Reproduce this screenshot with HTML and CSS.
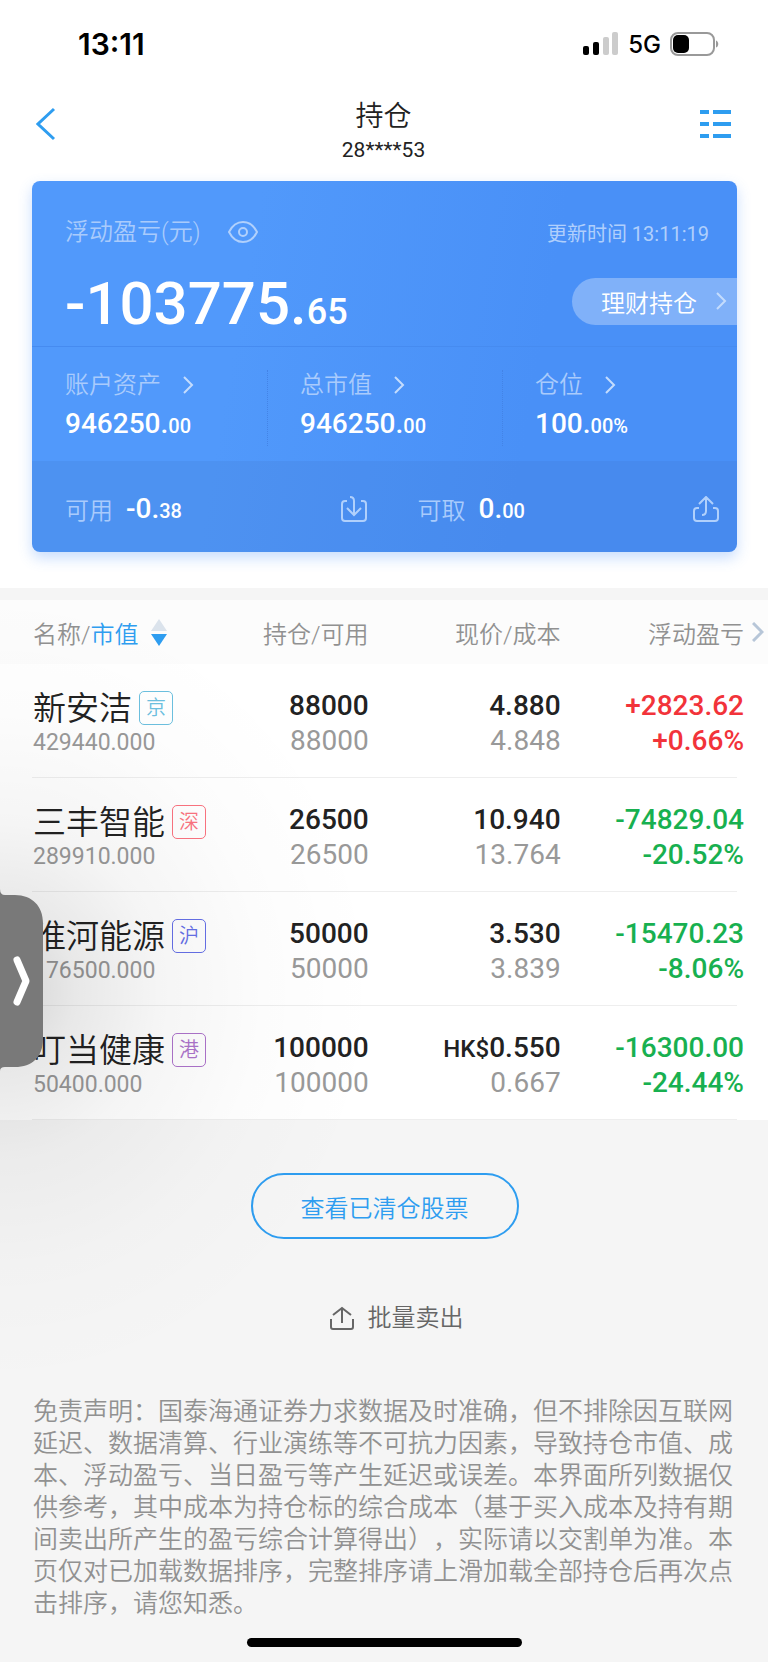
FILE: index.html
```
<!doctype html>
<html lang="zh-CN">
	<head>
		<meta charset="utf-8">
		<title>持仓</title>
		<meta name="viewport" content="width=device-width,initial-scale=1">
		<link rel="stylesheet" href="styles.css">
	</head>
	<body>
		<!-- 状态栏 -->
		<div class="status">
			<span class="time">13:11</span>
			<div class="status-right">
				<svg width="36" height="24" viewBox="0 0 36 24">
					<rect x="0" y="14" width="6" height="9" rx="2"/>
					<rect x="10" y="10" width="6" height="13" rx="2"/>
					<rect x="20" y="5" width="6" height="18" rx="2" fill="#ccc"/>
					<rect x="29" y="0" width="6" height="23" rx="2" fill="#ccc"/>
				</svg>
				<span class="net">5G</span>
				<svg width="50" height="24" viewBox="0 0 50 24">
					<rect x="1" y="1" width="43" height="22" rx="7" fill="none" stroke="#999" stroke-width="2"/>
					<rect x="3" y="3" width="16" height="18" rx="5"/>
					<path d="M46 8.5c3 1 3 6 0 7z" fill="#999"/>
				</svg>
			</div>
		</div>
		<!-- 导航 -->
		<header class="nav">
			<button class="icon-btn back" aria-label="返回">
				<svg width="20" height="34" viewBox="0 0 20 34"><path d="M18 2 2 17l16 15" fill="none" stroke="#2e9df0" stroke-width="3"/></svg>
			</button>
			<div class="nav-title">
				<h1>持仓</h1>
				<p>28****53</p>
			</div>
			<button class="icon-btn" aria-label="菜单">
				<svg width="31" height="28" viewBox="0 0 31 28" fill="#2e9df0">
					<path d="M0 0h9v4H0zM13 0h18v4H13zM0 12h9v4H0zM13 12h18v4H13zM0 24h9v4H0zM13 24h18v4H13z"/>
				</svg>
			</button>
		</header>
		<!-- 资产卡片 -->
		<section class="card">
			<div class="card-top">
				<div class="line">
					<span class="label">浮动盈亏(元)</span>
					<button class="icon-btn eye" aria-label="显示金额">
						<svg width="30" height="22" viewBox="0 0 30 22" fill="none" stroke="#b0d0fc" stroke-width="2">
							<path d="M1 11C4 5 9 1 15 1s11 4 14 10c-3 6-8 10-14 10S4 17 1 11z"/>
							<circle cx="15" cy="11" r="4"/>
						</svg>
					</button>
					<span class="update">更新时间 13:11:19</span>
				</div>
				<div class="line total">
					<strong class="profit">-103775.<small>65</small></strong>
					<a class="pill" href="#">理财持仓
						<svg class="arrow" width="11" height="18" viewBox="0 0 11 18"><path d="m1 1 8 8-8 8"/></svg>
					</a>
				</div>
			</div>
			<div class="card-mid">
				<a class="asset" href="#">
					<span class="label">账户资产<svg class="arrow" width="11" height="18" viewBox="0 0 11 18"><path d="m1 1 8 8-8 8"/></svg></span>
					<strong>946250.<small>00</small></strong>
				</a>
				<a class="asset" href="#">
					<span class="label">总市值<svg class="arrow" width="11" height="18" viewBox="0 0 11 18"><path d="m1 1 8 8-8 8"/></svg></span>
					<strong>946250.<small>00</small></strong>
				</a>
				<a class="asset" href="#">
					<span class="label">仓位<svg class="arrow" width="11" height="18" viewBox="0 0 11 18"><path d="m1 1 8 8-8 8"/></svg></span>
					<strong>100.<small>00%</small></strong>
				</a>
			</div>
			<div class="card-bottom">
				<div class="cash">
					<span class="label">可用</span><strong>-0.<small>38</small></strong>
					<button class="icon-btn" aria-label="转入">
						<svg class="line-icon" width="26" height="26" viewBox="0 0 26 26"><path d="M6 5H4a3 3 0 0 0-3 3v14a3 3 0 0 0 3 3h18a3 3 0 0 0 3-3V8a3 3 0 0 0-3-3h-2M9 1c3 0 4 1 4 4v13M6 12l7 7 7-7"/></svg>
					</button>
				</div>
				<div class="cash">
					<span class="label">可取</span><strong>0.<small>00</small></strong>
					<button class="icon-btn" aria-label="转出">
						<svg class="line-icon" width="26" height="26" viewBox="0 0 26 26"><path d="M6 12H4a3 3 0 0 0-3 3v7a3 3 0 0 0 3 3h18a3 3 0 0 0 3-3v-7a3 3 0 0 0-3-3h-2M9 19c3 0 4-1 4-4V2M6 8l7-7 7 7"/></svg>
					</button>
				</div>
			</div>
		</section>
		<!-- 持仓列表 -->
		<table class="list">
			<thead>
				<tr>
					<th class="name"><button class="sort">名称/<em>市值</em>
						<svg width="16" height="27" viewBox="0 0 16 27"><path d="m8 0 8 12H0z" fill="#dbe3ec"/><path d="M0 15h16L8 27z" fill="#2e9df0"/></svg>
					</button></th>
					<th class="hold">持仓/可用</th>
					<th class="price">现价/成本</th>
					<th class="gain">浮动盈亏
						<svg class="more" width="12" height="20" viewBox="0 0 12 20"><path d="m1 1 9 9-9 9" fill="none" stroke="#b7c6d8" stroke-width="3"/></svg>
					</th>
				</tr>
			</thead>
			<tbody>
				<tr>
					<td class="name"><div class="stock">新安洁<span class="tag jing">京</span></div><p>429440.000</p></td>
					<td>88000<p>88000</p></td>
					<td>4.880<p>4.848</p></td>
					<td class="gain up">+2823.62<p>+0.66%</p></td>
				</tr>
				<tr>
					<td class="name"><div class="stock">三丰智能<span class="tag shen">深</span></div><p>289910.000</p></td>
					<td>26500<p>26500</p></td>
					<td>10.940<p>13.764</p></td>
					<td class="gain down">-74829.04<p>-20.52%</p></td>
				</tr>
				<tr>
					<td class="name"><div class="stock">淮河能源<span class="tag hu">沪</span></div><p>176500.000</p></td>
					<td>50000<p>50000</p></td>
					<td>3.530<p>3.839</p></td>
					<td class="gain down">-15470.23<p>-8.06%</p></td>
				</tr>
				<tr>
					<td class="name"><div class="stock">叮当健康<span class="tag gang">港</span></div><p>50400.000</p></td>
					<td>100000<p>100000</p></td>
					<td><small>HK$</small>0.550<p>0.667</p></td>
					<td class="gain down">-16300.00<p>-24.44%</p></td>
				</tr>
			</tbody>
		</table>
		<!-- 底部 -->
		<footer class="foot">
			<button class="cleared">查看已清仓股票</button>
			<button class="batch">
				<svg width="24" height="24" viewBox="0 0 24 24" fill="none" stroke="#666" stroke-width="2"><path d="M1 13v8a2 2 0 0 0 2 2h18a2 2 0 0 0 2-2v-8M12 17V2M3 9l9-7 9 7"/></svg>
				批量卖出
			</button>
			<p class="notice">免责声明：国泰海通证券力求数据及时准确，但不排除因互联网延迟、数据清算、行业演练等不可抗力因素，导致持仓市值、成本、浮动盈亏、当日盈亏等产生延迟或误差。本界面所列数据仅供参考，其中成本为持仓标的综合成本（基于买入成本及持有期间卖出所产生的盈亏综合计算得出），实际请以交割单为准。本页仅对已加载数据排序，完整排序请上滑加载全部持仓后再次点击排序，请您知悉。</p>
			<div class="home"></div>
		</footer>
		<!-- 左侧悬浮把手 -->
		<div class="shade"></div>
		<button class="handle" aria-label="展开">
			<svg width="43" height="182" viewBox="0 0 43 182">
				<path d="M0 0q0 6 5 6h10c17 0 28 11 28 28v116c0 18-11 28-28 28H5q-5 0-5 4z" fill="#797979"/>
				<path d="m17 71 9 21-9 21" fill="none" stroke="#fff" stroke-width="7" stroke-linecap="round" stroke-linejoin="round"/>
			</svg>
		</button>
	</body>
</html>
```
FILE: styles.css
```
* {
	margin: 0;
	padding: 0;
	box-sizing: border-box;
}
body{
	position: relative;
	background-color: #fff;
	font-family: Roboto,"Noto Sans CJK SC",sans-serif;
	font-size: 24px;
	font-weight: 350;
	color: #222;
	overflow-x: hidden;
}
button{
	border: 0;
	background: none;
	font: inherit;
	color: inherit;
}
a{
	color: inherit;
	text-decoration: none;
}
svg{
	display: block;
	flex: none;
}
strong{
	font-size: 28px;
	font-weight: 500;
	color: #fff;
}
strong small{font-size: 20px;}

/* 状态栏 */
.status{
	display: flex;
	align-items: center;
	justify-content: space-between;
	height: 88px;
	padding: 0 48px 0 78px;
	font-family: Inter,sans-serif;
	color: #000;
}
.time{
	font-size: 30px;
	font-weight: 600;
}
.status-right{
	display: flex;
	align-items: center;
	gap: 9px;
}
.net{
	font-size: 24px;
	font-weight: 500;
}

/* 导航 */
.nav{
	display: flex;
	align-items: center;
	justify-content: space-between;
	height: 72px;
	padding: 0 37px 0 36px;
}
.back{width: 31px;}
.nav-title{
	padding-top: 14px;
	text-align: center;
}
.nav h1{
	font-size: 28px;
	line-height: 38px;
	font-weight: 350;
}
.nav p{
	font-size: 21px;
	line-height: 28px;
	font-weight: 400;
}

/* 资产卡片 */
.card{
	margin: 21px 31px 36px 32px;
	border-radius: 8px;
	background: linear-gradient(100deg,#5199fb 30%,#4990f7 70%);
	box-shadow: 0 6px 14px rgba(73,144,247,.3);
	overflow: hidden;
}
.label{color: #a9cbfc;}
.card-top{
	height: 165px;
	padding: 33px 0 0 33px;
}
.line{
	display: flex;
	align-items: center;
}
.line .label{line-height: 36px;}
.eye{margin-left: 27px;}
.update{
	margin-left: auto;
	padding-right: 28px;
	font-size: 20px;
	font-weight: 400;
	color: #b0cffc;
}
.total{margin-top: 19px;}
.profit{
	font-size: 60px;
	line-height: 70px;
}
.profit small{font-size: 36px;}
.pill{
	display: flex;
	align-items: center;
	gap: 19px;
	height: 47px;
	margin: 0 0 14px auto;
	padding: 0 10px 0 29px;
	border-radius: 24px 0 0 24px;
	background-color: rgba(255,255,255,.3);
	color: #fff;
}
.arrow{
	fill: none;
	stroke: #c4dcfd;
	stroke-width: 2;
}
.card-mid{
	display: grid;
	grid-template-columns: repeat(3,1fr);
	height: 115px;
	padding: 23px 0 24px;
	border-top: 1px solid #468bf0;
}
.asset{
	padding-left: 32px;
	border-left: 1px dotted #4383e6;
}
.asset:first-child{border-left-color: transparent;}
.asset .label{
	display: flex;
	align-items: center;
	gap: 22px;
	line-height: 30px;
}
.asset strong{
	display: block;
	margin-top: 4px;
	line-height: 40px;
}
.card-bottom{
	display: grid;
	grid-template-columns: 1fr 1fr;
	height: 91px;
	background-color: rgba(60,110,190,.15);
}
.cash{
	display: flex;
	align-items: center;
	padding: 4px 18px 0 33px;
}
.cash strong{margin-left: 13px;}
.cash button{margin-left: auto;}
.line-icon{
	fill: none;
	stroke: #b0d0fc;
	stroke-width: 2;
}

/* 持仓列表 */
.list{
	width: 100%;
	border-top: 12px solid #f5f5f5;
	border-spacing: 0;
	table-layout: fixed;
	text-align: right;
}
.list th{
	position: relative;
	height: 64px;
	background-color: #fcfcfc;
	font-weight: 350;
	color: #919191;
}
.list .name{
	padding-left: 33px;
	text-align: left;
}
.list .hold{width: 23%;}
.list th.name{width: 25%;}
.list .price{width: 25%;}
.list .gain{padding-right: 24px;}
.sort{
	display: flex;
	align-items: center;
	white-space: nowrap;
}
.sort em{
	font-style: normal;
	color: #2e9df0;
}
.sort svg{margin-left: 12px;}
.more{
	position: absolute;
	right: 4px;
	top: 22px;
}
.list tbody tr{background: linear-gradient(#eee,#eee) no-repeat 32px 100% / calc(100% - 63px) 1px;}
.list td{
	height: 114px;
	padding: 24px 0 20px;
	font-size: 28px;
	line-height: 35px;
	font-weight: 500;
	vertical-align: top;
	white-space: nowrap;
}
.list td p{
	font-weight: 400;
	color: #999;
}
.list td small{
	font-size: 24px;
	line-height: 30px;
}
.list .stock{
	display: flex;
	align-items: center;
	height: 40px;
	font-size: 33px;
	font-weight: 350;
}
.list .name p{
	font-size: 23px;
	line-height: 30px;
}
.tag{
	flex: none;
	width: 34px;
	height: 34px;
	margin-left: 7px;
	border: 1px solid;
	border-radius: 5px;
	font-size: 20px;
	line-height: 32px;
	text-align: center;
}
.jing{color: #6cc0df;}
.shen{color: #fb7380;}
.hu{color: #6670e8;}
.gang{color: #ad73cb;}
.up,.list .up p{color: #f2333a;}
.down,.list .down p{color: #18b050;}
.list .up p,.list .down p{font-weight: 500;}

/* 底部 */
.foot{
	display: flex;
	flex-direction: column;
	align-items: center;
	padding: 53px 32px 15px 33px;
	background-color: #f5f5f5;
}
.cleared{
	height: 66px;
	padding: 0 48px;
	border: 2px solid #2e9df0;
	border-radius: 33px;
	color: #2e9df0;
}
.batch{
	display: flex;
	align-items: center;
	gap: 14px;
	margin: 59px 0 58px;
	padding-left: 24px;
	line-height: 40px;
	color: #666;
}
.notice{
	font-size: 25px;
	line-height: 32px;
	color: #919191;
	text-spacing-trim: space-all;
}
.home{
	width: 39%;
	height: 9px;
	margin-top: 18px;
	border-radius: 5px;
	background-color: #000;
}

/* 左侧把手和阴影 */
.shade{
	position: absolute;
	left: 0;
	top: 590px;
	width: 380px;
	height: 800px;
	background: radial-gradient(380px 400px at 0 50%,rgba(0,0,0,.18),rgba(0,0,0,.09) 20%,rgba(0,0,0,.04) 42%,rgba(0,0,0,.01) 70%,transparent);
	pointer-events: none;
}
.handle{
	position: absolute;
	left: 0;
	top: 889px;
}
```
